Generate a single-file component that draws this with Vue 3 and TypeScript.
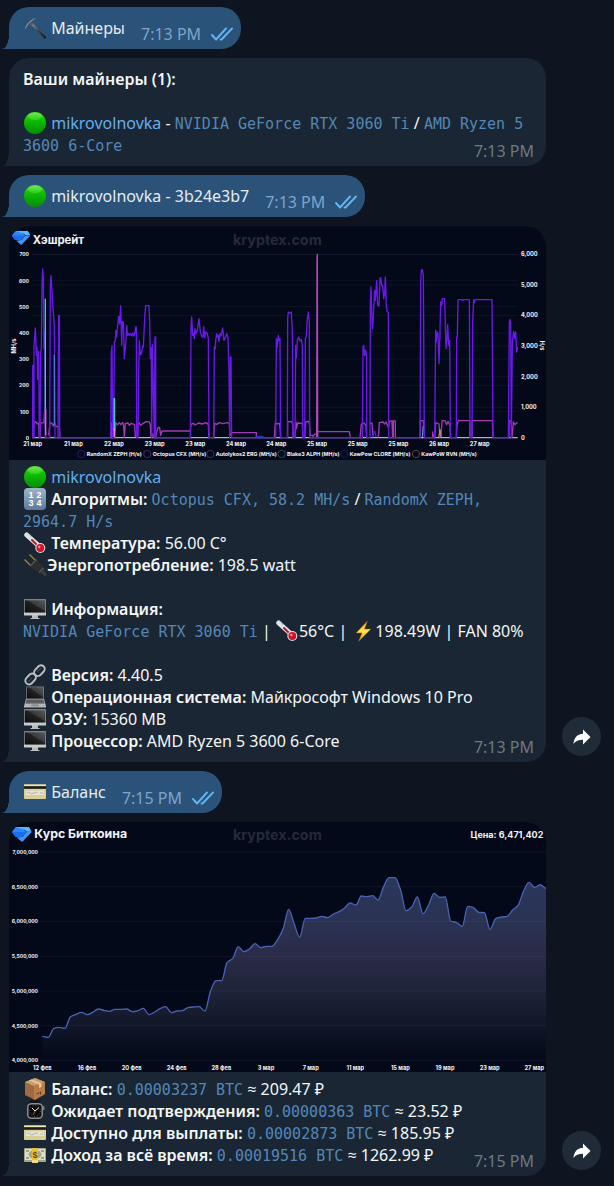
<script setup lang="ts">
type Point = [number, number]

interface AxisLabel {
  at: number
  text: string
}

const hashLeft: AxisLabel[] = [700, 600, 500, 400, 300, 200, 100, 0].map((v, i) => ({
  at: Math.round(97 + i * 78.6),
  text: String(v),
}))

const hashRight: AxisLabel[] = ['6,000', '5,000', '4,000', '3,000', '2,000', '1,000', '0'].map((text, i) => ({
  at: Math.round(97 + i * 91.7),
  text,
}))

const hashDays: AxisLabel[] = [21, 21, 22, 23, 23, 24, 24, 25, 25, 25, 26, 27].map((d, i) => ({
  at: Math.round(98 + i * 121.9),
  text: `${d} мар`,
}))

const legend = [
  { at: 244, color: '#4420a0', text: 'RandomX ZEPH (H/s)' },
  { at: 442, color: '#6c2f86', text: 'Octopus CFX (MH/s)' },
  { at: 631, color: '#5d3f6e', text: 'Autolykos2 ERG (MH/s)' },
  { at: 845, color: '#23706f', text: 'Blake3 ALPH (MH/s)' },
  { at: 1033, color: '#1e2290', text: 'KawPow CLORE (MH/s)' },
  { at: 1248, color: '#80604f', text: 'KawPoW RVN (MH/s)' },
]

const randomx =
  'M98 647V430H100V647H102V372L106 318 109 400 111 375 113 472 116 388 118 647H120L122 395 124 375 126 200 128 141 130 165 132 380 134 330 136 647H149L151 190 153 161 155 190 159 260 163 310 165 647H174L176 280H178L179 647' +
  'H332L334 390 336 372 338 647H341L343 360 346 356 348 325 350 345 354 300 356 283 359 306 362 251 365 370 367 298 370 300 373 410 376 378 378 350 380 310 383 340 386 334 389 340 392 335 396 342 399 333 402 342 405 330 407 315 409 315 410 647' +
  'H414L416 460 418 357 421 398 424 395 428 372 430 375 434 290 437 251H447L449 300 451 410 454 378 455 647 457 367 460 500 463 647 465 345 467 345V647' +
  'H571L573 310 575 285 578 340 581 335 583 350 585 320 587 335 592 325 597 290 601 330 606 345 609 345 611 315 614 348 617 330 622 335 625 350 627 647' +
  'H641L643 375 646 380 647 355 650 335 652 345 655 340 657 358 660 335 663 342 668 318 672 355 677 345 680 335 684 348 687 450 689 647 691 405H693L695 647' +
  'H827L829 350 831 377 835 340 837 355 840 350 842 647H862L863 290 865 270 868 273 872 273 874 270 877 330 879 647H885L887 370 889 408 892 355 896 345 900 357 904 352 907 370 908 647H914L916 350 919 345 922 290 925 270 928 300 929 647' +
  'H1087L1089 375 1091 370 1094 400 1097 385 1100 405V647H1110L1111 240 1113 195 1116 300 1118 320 1121 260 1124 205 1126 235 1130 175 1133 250 1137 252 1140 168 1142 167 1145 190 1148 190 1151 230 1154 215 1156 165 1159 250 1161 268 1165 272 1166 647' +
  'H1260L1262 180 1264 145 1267 143 1270 160 1273 647H1304L1307 325 1309 360 1311 330 1314 335 1317 425 1320 330 1322 240 1325 250 1327 230 1334 230 1338 380 1341 350 1343 308 1346 370 1349 355 1351 647' +
  'H1369L1370 345 1372 345 1374 233H1385L1388 235 1391 233H1408L1410 647H1416L1418 300 1421 233 1423 242 1426 233H1476L1479 647H1525L1528 300 1530 292 1532 300 1534 647 1537 360 1541 328 1544 350 1547 330 1550 390 1553 375'

const octopus =
  'M99 647L102 605 107 599 112 606 116 603 118 647M120 647L122 603 132 602 134 560 137 647M146 640L150 602 156 604 160 612 164 602 168 614 178 614 180 647M332 647L334 602 336 647 344 647 347 602 352 608 358 602 363 608 368 601 371 612 373 646 376 604 384 603 388 610 394 604 404 608 406 646' +
  'M412 647L414 604 418 603 422 610 430 604 438 599 448 600 451 608 453 645 458 636 461 646 467 647 471 626 475 616 479 617 482 640 486 627H571L573 607 580 604 585 609 596 603 606 606 618 602 625 607 627 647' +
  'M641 647L644 604 650 607 658 602 668 605 682 602 688 604 690 640 696 632H769V645M823 647L826 600 829 606 839 604 842 647M863 647V600L872 598 878 604 880 647M885 647L888 600 889 620 893 603 907 604 909 647M914 647L917 600 925 598 928 604 931 640 936 640 940 643 944 636 947 636' +
  'M951 629H1048L1051 645M1080 647L1084 606 1092 603 1098 611 1100 647M1110 605L1116 603 1119 647M1135 647L1138 602 1149 600 1154 606 1158 600 1165 616 1168 598 1176 596 1178 647M1180 645V597H1186V647M1261 647V596H1270L1273 640M1298 647V630L1301 647M1304 647L1307 602 1317 606 1320 647M1323 645L1326 596H1335L1340 608 1344 598 1350 610 1352 647M1369 647L1371 610 1375 596H1409V647M1416 647V596H1477L1479 647M1527 647V596H1533L1536 647 1540 600 1545 608 1548 604 1553 602'

const priceY: AxisLabel[] = ['7,000,000', '6,500,000', '6,000,000', '5,500,000', '5,000,000', '4,500,000', '4,000,000'].map(
  (text, i) => ({ at: Math.round(111 + i * 104.2), text }),
)

const priceX: AxisLabel[] = [
  '12 фев', '16 фев', '20 фев', '24 фев', '28 фев', '3 мар', '7 мар', '11 мар', '15 мар', '19 мар', '23 мар', '27 мар',
].map((text, i) => ({ at: Math.round(127 + i * 134.2), text }))

const price: Point[] = [
  [127, 664], [145, 667], [161, 641], [177, 637], [195, 640], [211, 606], [228, 598], [245, 592], [262, 599],
  [278, 592], [295, 582], [312, 586], [328, 589], [345, 583], [362, 583], [380, 582], [397, 590], [414, 587],
  [430, 580], [447, 599], [464, 591], [480, 581], [497, 575], [514, 593], [530, 588], [547, 587], [564, 578],
  [580, 576], [597, 575], [615, 588], [631, 530], [648, 497], [665, 497], [681, 443], [698, 430], [715, 395],
  [731, 410], [748, 402], [765, 386], [782, 398], [800, 394], [816, 394], [832, 375], [850, 340], [866, 283],
  [882, 325], [899, 366], [916, 310], [933, 310], [949, 309], [966, 304], [983, 308], [1000, 297], [1017, 290],
  [1034, 279], [1050, 264], [1068, 270], [1084, 243], [1101, 245], [1118, 242], [1134, 255], [1151, 215],
  [1167, 188], [1185, 188], [1202, 226], [1218, 287], [1236, 275], [1252, 246], [1269, 296], [1286, 270],
  [1302, 235], [1319, 247], [1336, 246], [1352, 318], [1370, 323], [1387, 334], [1403, 274], [1420, 278],
  [1437, 292], [1453, 293], [1470, 343], [1487, 311], [1504, 306], [1521, 304], [1538, 285], [1554, 271],
  [1571, 228], [1587, 202], [1604, 217], [1621, 209], [1638, 220],
]

function smooth(points: Point[]): string {
  const slope = (i: number): number => {
    if (i === 0 || i === points.length - 1) return 0
    const a = points[i][1] - points[i - 1][1]
    const b = points[i + 1][1] - points[i][1]
    return a * b <= 0 ? 0 : (2 * a * b) / (a + b)
  }
  let d = `M${points[0][0]} ${points[0][1]}`
  for (let i = 1; i < points.length; i++) {
    const [x0, y0] = points[i - 1]
    const [x1, y1] = points[i]
    const dx = (x1 - x0) / 3
    d += `C${x0 + dx} ${y0 + slope(i - 1) / 3} ${x1 - dx} ${y1 - slope(i) / 3} ${x1} ${y1}`
  }
  return d
}

const priceLine = smooth(price)
const priceArea = `${priceLine}V737H127Z`
</script>

<template>
  <svg class="sprite" aria-hidden="true">
    <defs>
      <linearGradient id="g-green" x1="0" y1="0" x2="0" y2="1">
        <stop offset="0" stop-color="#5be83c" /><stop offset=".3" stop-color="#12c400" />
        <stop offset=".65" stop-color="#08a800" /><stop offset="1" stop-color="#0a8c06" />
      </linearGradient>
      <linearGradient id="g-num" x1="0" y1="0" x2="0" y2="1">
        <stop offset="0" stop-color="#9db5cc" /><stop offset="1" stop-color="#5b7a9a" />
      </linearGradient>
      <linearGradient id="g-screen" x1="0" y1="1" x2="1" y2="0">
        <stop offset="0" stop-color="#0c0c0d" /><stop offset=".55" stop-color="#222223" />
        <stop offset=".56" stop-color="#39393a" /><stop offset="1" stop-color="#5a5a5b" />
      </linearGradient>
      <linearGradient id="g-handle" x1="0" y1="0" x2="1" y2="1">
        <stop offset="0" stop-color="#8d8d8d" /><stop offset=".5" stop-color="#444" /><stop offset="1" stop-color="#191919" />
      </linearGradient>
      <linearGradient id="g-bolt" x1="0" y1="0" x2="0" y2="1">
        <stop offset="0" stop-color="#ffb52a" /><stop offset=".5" stop-color="#ffe14a" /><stop offset="1" stop-color="#f09a12" />
      </linearGradient>
      <linearGradient id="g-area" x1="0" y1="0" x2="0" y2="1">
        <stop offset="0" stop-color="#2a365b" /><stop offset=".23" stop-color="#2a3354" />
        <stop offset=".42" stop-color="#2a2b48" /><stop offset=".62" stop-color="#1e2438" />
        <stop offset=".8" stop-color="#121729" /><stop offset="1" stop-color="#040919" />
      </linearGradient>
    </defs>
    <symbol id="i-pick" viewBox="0 0 22 22">
      <path d="M8 7L21 20.500" stroke="url(#g-handle)" stroke-width="2.400" stroke-linecap="round" />
      <path d="M.8 12.500C1.500 7.500 6.500 2.200 12.500.8C10 2.600 5.500 5.500 3.600 8.400Q2.200 10.500.8 12.500Z" fill="#8f8b88" />
      <path d="M5.500 7.500L8 5.300 9.500 7 7 9.200Z" fill="#5e5a58" />
    </symbol>
    <symbol id="i-green" viewBox="0 0 22 22">
      <circle cx="11" cy="11" r="11" fill="url(#g-green)" />
      <ellipse cx="11" cy="4.500" rx="7" ry="3.500" fill="#b4ff9a" opacity=".25" />
    </symbol>
    <symbol id="i-temp" viewBox="0 0 22 22">
      <path d="M2.800 3L15 14" stroke="#dfe3e6" stroke-width="5" stroke-linecap="round" />
      <path d="M4 1.500L8 5.500" stroke="#8b9499" stroke-width="1" stroke-dasharray="1 1" />
      <path d="M8 8L15.500 15.500" stroke="#c8102a" stroke-width="2" stroke-linecap="round" />
      <circle cx="16.300" cy="16" r="5" fill="#d9dee2" /><circle cx="16.300" cy="16" r="3.900" fill="#d4122c" />
      <circle cx="15.300" cy="15" r="1.200" fill="#ff8c9a" />
    </symbol>
    <symbol id="i-plug" viewBox="0 0 22 22">
      <path d="M.5 5.500L6.500 11.500M5.500.5L11.500 6.500" stroke="#a5833c" stroke-width="1.400" />
      <path d="M5 12L12.500 4.500 17 10 20.500 13.500 21.500 20.500 15 19.500 11.500 16.500Z" fill="#2c2d2f" />
      <path d="M6 12L12.500 5.500M15 18.500L19.500 14" stroke="#55575a" stroke-width="1.200" />
      <path d="M18 17L22 21.500" stroke="#3a3b3d" stroke-width="3.500" />
    </symbol>
    <symbol id="i-monitor" viewBox="0 0 22 22">
      <path d="M8 17H14V20H15.500V21H6.500V20H8Z" fill="#b9bcbf" />
      <rect y="1.500" width="22" height="16" rx=".6" fill="#c9cbcd" /><rect y="1.500" width="22" height="13" fill="#86888a" />
      <rect x=".8" y="2.300" width="20.400" height="12.200" fill="url(#g-screen)" />
    </symbol>
    <symbol id="i-link" viewBox="0 0 22 22" fill="none">
      <g stroke="#b9bdc0" stroke-width="2">
        <rect x="-5.500" y="-3.300" width="12" height="7.400" rx="3.700" transform="translate(14.800 6.800) rotate(-47)" />
        <rect x="-6" y="-3.700" width="12" height="7.400" rx="3.700" transform="translate(6.600 15) rotate(-47)" />
      </g>
      <path d="M4 18L8 14M13 8L17 4" stroke="#62676b" stroke-width=".7" />
    </symbol>
    <symbol id="i-laptop" viewBox="0 0 22 22">
      <path d="M2 .5H20V13H2Z" fill="#77797b" /><path d="M2.800 1.200H19.200V12.500H2.800Z" fill="url(#g-screen)" />
      <path d="M2 13H20L22 20V21.500H0V20Z" fill="#b4b6b8" /><path d="M2.700 13.500H19.300L20.500 17.500H1.500Z" fill="#4c4d4f" />
      <path d="M2 15H20M1.800 16.300H20.200" stroke="#8b8c8e" stroke-width=".4" /><path d="M7.500 18.300H14.500L15 20.500H7Z" fill="#8e9092" />
    </symbol>
    <symbol id="i-card" viewBox="0 0 22 22">
      <rect y="3.500" width="22" height="14.500" rx="1" fill="#d8cf94" /><rect y="3.500" width="22" height="1.500" fill="#ece6b8" />
      <rect y="5.200" width="22" height="2.600" fill="#1b1a16" /><rect x="2" y="9.500" width="18" height="4.500" fill="#e6e4d4" />
      <path d="M3 12Q5 10 6 12T10 12T14 12M16 12H19" stroke="#9ba2b3" stroke-width=".8" fill="none" />
    </symbol>
    <symbol id="i-bolt" viewBox="0 0 22 22">
      <path d="M15.500 1L4 13H10L6.500 21.500 19 9H12.500Z" fill="url(#g-bolt)" stroke="#8c5b10" stroke-width=".5" />
    </symbol>
    <symbol id="i-box" viewBox="0 0 22 22">
      <path d="M1 4L11 0 21 4V16L11 22 1 17Z" fill="#a26b3f" /><path d="M1 4L11 0 21 4 10 8Z" fill="#cf9c6b" />
      <path d="M10 8L21 4V16L10 22Z" fill="#b87c4b" /><path d="M5 2.400L15 6.200V10L17.500 9V5.300L7.500 1.400Z" fill="#e7c9a1" />
      <path d="M12.500 16L15.500 14.700M16.500 13.500V16.500" stroke="#5e3b20" stroke-width="1" />
    </symbol>
    <symbol id="i-watch" viewBox="0 0 22 22">
      <path d="M6 0H16L17 5H5ZM5 17H17L16 22H6Z" fill="#151719" /><rect x="3" y="3" width="16" height="16" rx="4.500" fill="#8b8e91" />
      <rect x="19" y="6" width="1.500" height="4" fill="#75787a" /><rect x="4.500" y="4.500" width="13" height="13" rx="3" fill="#0a0a0b" />
      <circle cx="11" cy="11" r="5.400" stroke="#8e8e8e" stroke-dasharray=".7 2.100" fill="none" />
      <path d="M8 8L11 11 15 7.500" stroke="#eee" stroke-width="1" fill="none" /><path d="M11 11L9 15" stroke="#e98422" stroke-width=".7" />
    </symbol>
    <symbol id="i-checks" viewBox="0 0 22 14">
      <path d="M1 8L5 12.500 15 1.500M9.500 12.500L10.500 12.500 21 1.500" fill="none" stroke="#62b5f5" stroke-width="1.900" stroke-linejoin="round" stroke-linecap="round" />
    </symbol>
    <symbol id="i-share" viewBox="0 0 18 16">
      <path d="M10 .5L17.500 8 10 15.500V10.800C5.500 10.800 2.500 12 .5 15C1 9 4 5.200 10 4.800Z" fill="#fff" />
    </symbol>
    <symbol id="i-gem" viewBox="0 0 58 44">
      <path d="M10 0H28L42 15 28 29H11L0 15Z" fill="#2a86fb" /><path d="M0 15H42L28 29H11Z" fill="#1c6bf0" />
      <path d="M10 0H50L58 14H43L38 9Z" fill="#57b6ff" /><path d="M43 15H58L30 44 14 31 30 29Z" fill="#3c97fb" />
    </symbol>
  </svg>

  <main class="chat">
    <div class="row">
      <article class="bubble out">
        <p><svg class="emoji" aria-hidden="true"><use href="#i-pick" /></svg> Майнеры</p>
        <div class="meta"><time>7:13 PM</time><svg class="checks" aria-hidden="true"><use href="#i-checks" /></svg></div>
      </article>
    </div>

    <div class="row">
      <article class="bubble in">
        <div class="body">
          <div class="text">
            <p><b>Ваши майнеры (1):</b></p>
            <p class="blank"></p>
            <p><svg class="emoji" aria-hidden="true"><use href="#i-green" /></svg> <a href="#mikrovolnovka">mikrovolnovka</a> - <code>NVIDIA GeForce RTX 3060 Ti</code> / <code>AMD Ryzen 5 3600 6-Core</code></p>
          </div>
          <time>7:13 PM</time>
        </div>
      </article>
    </div>

    <div class="row">
      <article class="bubble out">
        <p><svg class="emoji" aria-hidden="true"><use href="#i-green" /></svg> mikrovolnovka - 3b24e3b7</p>
        <div class="meta"><time>7:13 PM</time><svg class="checks" aria-hidden="true"><use href="#i-checks" /></svg></div>
      </article>
    </div>

    <div class="row">
      <article class="bubble in with-chart">
        <svg class="chart" viewBox="0 0 1611 702" role="img" aria-label="Хэшрейт">
          <rect width="1611" height="702" fill="#030919" />
          <g transform="translate(-27 -12)">
            <use href="#i-gem" x="35" y="26" width="56" height="43" />
            <text x="98" y="65" class="title">Хэшрейт</text>
            <text x="832" y="69" class="brand">kryptex.com</text>
            <g class="grid">
              <path v-for="l in hashLeft" :key="l.text" :d="`M97 ${l.at}H1553`" />
              <path v-for="l in hashRight" :key="l.text" :d="`M97 ${l.at}H1553`" />
            </g>
            <g class="tick end"><text v-for="l in hashLeft" :key="l.text" x="87" :y="l.at + 6">{{ l.text }}</text></g>
            <g class="tick"><text v-for="l in hashRight" :key="l.text" x="1563" :y="l.at + 6">{{ l.text }}</text></g>
            <g class="tick mid">
              <text v-for="(l, i) in hashDays" :key="i" :x="l.at" y="673">{{ l.text }}</text>
              <text transform="translate(47 372) rotate(-90)">MH/s</text>
              <text transform="translate(1619 371) rotate(90)">H/s</text>
            </g>
            <path d="M97 647H1553" stroke="#b9a9c8" stroke-width="4" />
            <g fill="none" stroke-width="4" stroke-linejoin="round">
              <path :d="octopus" stroke="#a23bb2" />
              <path :d="randomx" stroke="#6a19ea" />
              <path d="M136 560V230" stroke="#35d3c4" /><path d="M137 640V560" stroke="#c080a0" />
              <path d="M163 610V398" stroke="#3f74ee" /><path d="M343 626V528" stroke="#35d3c4" stroke-width="5" />
              <path d="M343 645V618" stroke="#e08ac8" />
              <path d="M950 645L951 110 952 97 953 645" stroke="#a94bb6" />
              <path d="M769 645L780 643H790M1118 645L1122 628H1125L1128 645" stroke="#2730d8" />
              <path d="M1316 645L1320 622 1323 645" stroke="#c98a7c" stroke-width="3" /><path d="M1267 645L1269 612" stroke="#4aa8a0" stroke-width="3" />
            </g>
            <g v-for="item in legend" :key="item.text">
              <circle :cx="item.at" cy="696" r="11" fill="none" :stroke="item.color" stroke-width="2" />
              <text class="legend" :x="item.at + 16" y="702">{{ item.text }}</text>
            </g>
          </g>
        </svg>
        <div class="body">
          <div class="text">
            <p><svg class="emoji" aria-hidden="true"><use href="#i-green" /></svg> <a href="#mikrovolnovka">mikrovolnovka</a></p>
            <p>
              <svg class="emoji" viewBox="0 0 22 22" aria-hidden="true">
                <rect width="22" height="22" rx="4" fill="url(#g-num)" />
                <g class="digits">
                  <text x="7" y="10">1</text><text x="15" y="10">2</text>
                  <text x="7" y="18">3</text><text x="15" y="18">4</text>
                </g>
              </svg>
              <b>&#32;Алгоритмы:</b> <code>Octopus CFX, 58.2 MH/s</code> / <code>RandomX ZEPH, 2964.7 H/s</code>
            </p>
            <p><svg class="emoji" aria-hidden="true"><use href="#i-temp" /></svg> <b>Температура:</b> 56.00 C°</p>
            <p><svg class="emoji" aria-hidden="true"><use href="#i-plug" /></svg><b>Энергопотребление:</b> 198.5 watt</p>
            <p class="blank"></p>
            <p><svg class="emoji" aria-hidden="true"><use href="#i-monitor" /></svg> <b>Информация:</b></p>
            <p><code>NVIDIA GeForce RTX 3060 Ti</code> | <svg class="emoji" aria-hidden="true"><use href="#i-temp" /></svg>56°C | <svg class="emoji" aria-hidden="true"><use href="#i-bolt" /></svg>198.49W | FAN 80%</p>
            <p class="blank"></p>
            <p><svg class="emoji" aria-hidden="true"><use href="#i-link" /></svg> <b>Версия:</b> 4.40.5</p>
            <p><svg class="emoji" aria-hidden="true"><use href="#i-laptop" /></svg> <b>Операционная система:</b> Майкрософт Windows 10 Pro</p>
            <p><svg class="emoji" aria-hidden="true"><use href="#i-monitor" /></svg> <b>ОЗУ:</b> 15360 MB</p>
            <p><svg class="emoji" aria-hidden="true"><use href="#i-monitor" /></svg> <b>Процессор:</b> AMD Ryzen 5 3600 6-Core</p>
          </div>
          <time>7:13 PM</time>
        </div>
      </article>
      <button class="share" type="button" aria-label="Переслать"><svg aria-hidden="true"><use href="#i-share" /></svg></button>
    </div>

    <div class="row">
      <article class="bubble out">
        <p><svg class="emoji" aria-hidden="true"><use href="#i-card" /></svg> Баланс</p>
        <div class="meta"><time>7:15 PM</time><svg class="checks" aria-hidden="true"><use href="#i-checks" /></svg></div>
      </article>
    </div>

    <div class="row">
      <article class="bubble in with-chart">
        <svg class="chart" viewBox="0 0 1611 750" role="img" aria-label="Курс Биткоина">
          <rect width="1611" height="750" fill="#030919" />
          <g transform="translate(-27 -21)">
            <use href="#i-gem" x="35" y="36" width="61" height="45" />
            <text x="103" y="70" class="title large">Курс Биткоина</text>
            <text x="832" y="74" class="brand">kryptex.com</text>
            <text x="1630" y="68" class="quote">Цена: 6,471,402</text>
            <path :d="priceArea" fill="url(#g-area)" />
            <g class="grid"><path v-for="l in priceY" :key="l.text" :d="`M120 ${l.at}H1638`" /></g>
            <path :d="priceLine" fill="none" stroke="#4a62b4" stroke-width="4" />
            <g class="tick end"><text v-for="l in priceY" :key="l.text" x="114" :y="l.at + 6">{{ l.text }}</text></g>
            <g class="tick mid"><text v-for="l in priceX" :key="l.text" :x="l.at" y="765">{{ l.text }}</text></g>
          </g>
        </svg>
        <div class="body">
          <div class="text">
            <p><svg class="emoji" aria-hidden="true"><use href="#i-box" /></svg> <b>Баланс:</b> <code>0.00003237 BTC</code> ≈ 209.47 ₽</p>
            <p><svg class="emoji" aria-hidden="true"><use href="#i-watch" /></svg> <b>Ожидает подтверждения:</b> <code>0.00000363 BTC</code> ≈ 23.52 ₽</p>
            <p><svg class="emoji" aria-hidden="true"><use href="#i-card" /></svg> <b>Доступно для выплаты:</b> <code>0.00002873 BTC</code> ≈ 185.95 ₽</p>
            <p>
              <svg class="emoji" viewBox="0 0 22 22" aria-hidden="true">
                <rect y="4" width="22" height="14" rx="1" fill="#a4a58e" /><rect x="1" y="5" width="20" height="11" fill="#dedfc9" />
                <ellipse cx="11" cy="10.500" rx="6.500" ry="4.500" fill="#a3aa8b" />
                <path d="M2 7H5M17 7H20M2 14H5M17 14H20" stroke="#60664f" stroke-width="1.200" />
                <rect x="8" y="4" width="6" height="14" fill="#e8c13e" /><path d="M8 16H14V19H8Z" fill="#f2dc82" />
                <text class="dollar" x="11" y="14">$</text>
              </svg>
              <b>&#32;Доход за всё время:</b> <code>0.00019516 BTC</code> ≈ 1262.99 ₽
            </p>
          </div>
          <time>7:15 PM</time>
        </div>
      </article>
      <button class="share" type="button" aria-label="Переслать"><svg aria-hidden="true"><use href="#i-share" /></svg></button>
    </div>
  </main>
</template>

<style>
body {
  margin: 0;
  background: #0e1520;
}
</style>

<style scoped>
.sprite {
  position: absolute;
  width: 0;
  height: 0;
}
.chat {
  display: flex;
  flex-direction: column;
  gap: 9px;
  padding: 7px 13px 10px 9px;
  font: 16px/22px "Noto Sans", "Open Sans", sans-serif;
  color: #f4f6f8;
}
.row {
  display: flex;
  align-items: flex-end;
  gap: 16px;
}
.bubble {
  position: relative;
  border-radius: 20px 20px 20px 0;
}
.bubble::before {
  content: "";
  position: absolute;
  left: -7px;
  bottom: 0;
  width: 7px;
  height: 14px;
}
.out {
  display: flex;
  gap: 16px;
  padding: 10px 8px 10px 14px;
  background: #2b5278;
  color: #e4ecf2;
}
.out::before {
  background: radial-gradient(ellipse 7px 14px at 0 0, transparent 96%, #2b5278 100%);
}
.in {
  flex: 1;
  min-width: 0;
  margin-right: 55px;
  background: #1a2633;
}
.in::before {
  background: radial-gradient(ellipse 7px 14px at 0 0, transparent 96%, #1a2633 100%);
}
.with-chart {
  margin-right: 0;
}
.chart {
  display: block;
  width: 100%;
  height: auto;
  border-radius: 20px 20px 0 0;
}
.body {
  display: grid;
  padding: 10px 12px 10px 14px;
}
.with-chart .body {
  padding-top: 6px;
}
.text,
.body time {
  grid-area: 1 / 1;
}
.body time {
  place-self: end;
  margin-bottom: -6px;
  color: #6d7983;
}
p {
  margin: 0;
}
.blank {
  height: 22px;
}
b {
  font-weight: 600;
}
a {
  color: #66aeee;
  text-decoration: none;
}
code {
  font: 15px/16px "DejaVu Sans Mono", "Liberation Mono", monospace;
  color: #5387b9;
}
.emoji {
  width: 24px;
  height: 22px;
  vertical-align: top;
}
.digits,
.dollar {
  font: 700 9px "Liberation Sans", Arial, sans-serif;
  text-anchor: middle;
  fill: #fff;
}
.dollar {
  fill: #6a4a0c;
}
.meta {
  display: flex;
  align-items: center;
  gap: 10px;
  margin: 6px 0 -6px;
  height: 22px;
  color: #7da5cd;
}
.checks {
  width: 22px;
  height: 14px;
}
.share {
  flex: none;
  display: grid;
  place-items: center;
  width: 39px;
  height: 39px;
  margin: 0 0 6px;
  padding: 0;
  border: 0;
  border-radius: 50%;
  background: #1f2c38;
}
.share svg {
  width: 18px;
  height: 16px;
}
.chart text {
  font-family: Inter, "Open Sans", sans-serif;
  font-weight: 700;
  fill: #f2f3f6;
}
.chart .title {
  font-size: 34px;
}
.chart .large {
  font-size: 37px;
}
.chart .brand {
  font-size: 43px;
  fill: #262a3a;
  text-anchor: middle;
}
.chart .quote {
  font-size: 27px;
  text-anchor: end;
}
.tick {
  font-size: 17px;
}
.legend {
  font-size: 16px;
}
.mid {
  text-anchor: middle;
}
.end {
  font-size: 15px;
  text-anchor: end;
}
.grid {
  stroke: #8ca0d2;
  stroke-opacity: 0.08;
  stroke-width: 3;
}
</style>
